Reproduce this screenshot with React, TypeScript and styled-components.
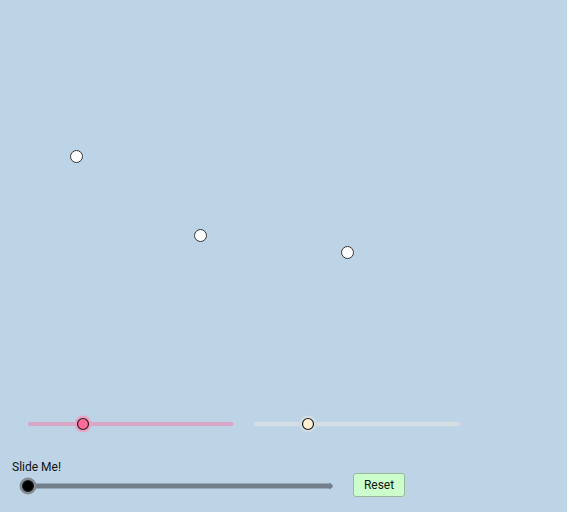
import styled, { createGlobalStyle } from 'styled-components';

const GlobalStyle = createGlobalStyle`
  html, body {
    margin: 0;
    padding: 0;
    background: #ffffff;
  }
  body {
    font-family: Roboto, "Liberation Sans", sans-serif;
  }
`;

const Board = styled.div`
  width: 567px;
  height: 512px;
  background: #bdd4e6;
  display: flex;
  flex-direction: column;
  overflow: hidden;
`;

const Stage = styled.div`
  position: relative;
  height: 412px;
  flex-shrink: 0;
`;

const Point = styled.div<{ $x: number; $y: number }>`
  position: absolute;
  left: ${(p) => p.$x - 6.5}px;
  top: ${(p) => p.$y - 6.5}px;
  width: 11px;
  height: 11px;
  border-radius: 50%;
  background: #ffffff;
  border: 1.2px solid #333333;
`;

const SliderRow = styled.div`
  display: flex;
  align-items: center;
  gap: 1px;
  padding-left: 18px;
  height: 24px;
`;

const Label = styled.div`
  margin-top: 24px;
  padding-left: 12px;
  font-size: 12px;
  line-height: 14px;
  color: #111111;
`;

const ControlRow = styled.div`
  display: flex;
  align-items: flex-start;
  gap: 11px;
  padding-left: 18px;
  margin-top: -1px;
`;

const ResetButton = styled.button`
  width: 52px;
  height: 24px;
  padding: 0;
  background: #ccffcc;
  border: 1px solid #9ab89a;
  border-radius: 3px;
  font-family: Roboto, "Liberation Sans", sans-serif;
  font-size: 12px;
  color: #111111;
  cursor: pointer;
`;

type SliderProps = {
  length: number;
  value: number;
  height: number;
  thickness: number;
  line: string;
  knob: string;
  halo: string;
};

function Slider({ length, value, height, thickness, line, knob, halo }: SliderProps) {
  const cy = height / 2;
  const x0 = 10;
  const x1 = x0 + length;
  return (
    <svg width={length + 20} height={height} viewBox={`0 0 ${length + 20} ${height}`}>
      <line
        x1={x0 + thickness / 2}
        y1={cy}
        x2={x1 - 2}
        y2={cy}
        stroke={line}
        strokeWidth={thickness}
        strokeLinecap="round"
      />
      <polygon
        points={`${x1 - 3},${cy - thickness / 2 - 1} ${x1 + 1},${cy} ${x1 - 3},${cy + thickness / 2 + 1}`}
        fill={line}
      />
      <circle cx={x0 + value} cy={cy} r={8.5} fill={halo} />
      <circle cx={x0 + value} cy={cy} r={5.5} fill={knob} stroke="#222222" strokeWidth={1.2} />
    </svg>
  );
}

export default function App() {
  const points = [
    { x: 76, y: 156 },
    { x: 200, y: 235 },
    { x: 347, y: 252 },
  ];

  return (
    <>
      <GlobalStyle />
      <Board>
        <Stage>
          {points.map((pt, i) => (
            <Point key={i} $x={pt.x} $y={pt.y} />
          ))}
        </Stage>
        <SliderRow>
          <Slider
            length={205}
            value={55}
            height={24}
            thickness={4}
            line="#d9a6c8"
            knob="#ff6b98"
            halo="#e8a3c8"
          />
          <Slider
            length={206}
            value={54}
            height={22}
            thickness={4}
            line="#d5dee2"
            knob="#ffefd3"
            halo="#d0dfe6"
          />
        </SliderRow>
        <Label>Slide Me!</Label>
        <ControlRow>
          <Slider
            length={304}
            value={0}
            height={26}
            thickness={5}
            line="#73808b"
            knob="#000000"
            halo="#858c93"
          />
          <ResetButton>Reset</ResetButton>
        </ControlRow>
      </Board>
    </>
  );
}
